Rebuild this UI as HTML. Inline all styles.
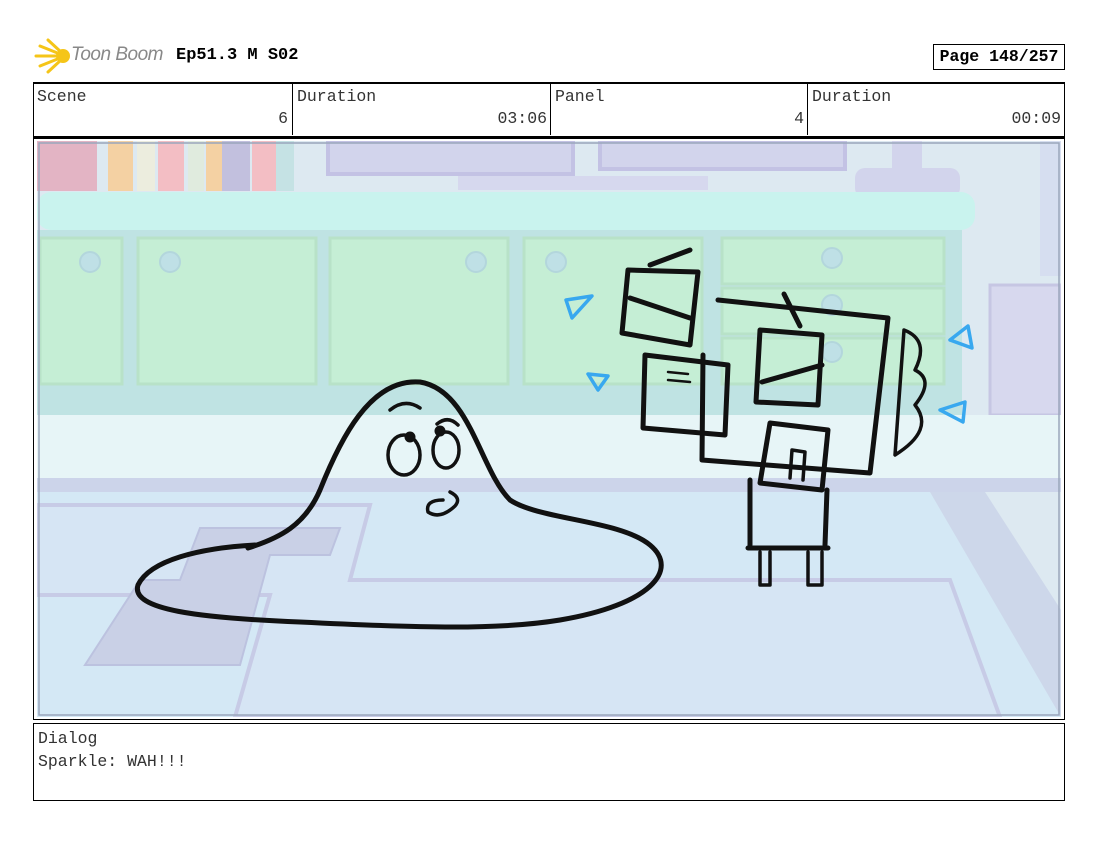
<!DOCTYPE html>
<html><head><style>
body{margin:0;width:1100px;height:850px;background:#fff;position:relative;font-family:"Liberation Mono",monospace;}
.a{position:absolute}
.cell{position:absolute;top:83px;height:52px;border-left:1px solid #000;font-size:16.5px;color:#333}
.cell .l{position:absolute;left:4px;top:4px}
.cell .v{position:absolute;right:4px;top:26px}
</style></head><body>
<svg class="a" style="left:34px;top:38px" width="40" height="36" viewBox="0 0 40 36">
<g stroke="#f5c518" stroke-width="3" stroke-linecap="round"><line x1="2" y1="18" x2="26" y2="18"/><line x1="6" y1="8" x2="26" y2="16"/><line x1="6" y1="28" x2="26" y2="20"/><line x1="14" y1="2" x2="27" y2="14"/><line x1="14" y1="34" x2="27" y2="22"/></g><circle cx="29" cy="18" r="7" fill="#f5c518"/></svg>
<div class="a" style="left:71px;top:44px;font:italic 19px 'Liberation Sans',sans-serif;color:#888;letter-spacing:-0.5px">Toon Boom</div>
<div class="a" style="left:176px;top:46px;font-weight:bold;font-size:17px">Ep51.3 M S02</div>
<div class="a" style="left:933px;top:44px;width:130px;height:24px;border:1px solid #000;font-weight:bold;font-size:16.5px;line-height:24px;text-align:center">Page 148/257</div>
<div class="a" style="left:33px;top:82px;width:1030px;height:52px;border:1px solid #000;border-top-width:2px;border-bottom-width:2px"></div>
<div class="cell" style="left:33px;width:259px;border-left:none"><span class="l">Scene</span><span class="v">6</span></div>
<div class="cell" style="left:292px;width:258px"><span class="l">Duration</span><span class="v">03:06</span></div>
<div class="cell" style="left:550px;width:257px"><span class="l">Panel</span><span class="v">4</span></div>
<div class="cell" style="left:807px;width:257px"><span class="l">Duration</span><span class="v">00:09</span></div>
<div class="a" style="left:33px;top:138px;width:1030px;height:580px;border:1px solid #000"></div>
<svg class="a" style="left:37px;top:141px" width="1024" height="576" viewBox="37 141 1024 576">
<rect x="37" y="141" width="1024" height="576" fill="#dde9f1"/>
<g opacity="0.75"><rect x="37" y="141" width="60" height="50" fill="#e6a3b5"/><rect x="108" y="141" width="25" height="50" fill="#fcc98a"/><rect x="137" y="141" width="18" height="50" fill="#f1efd8"/><rect x="158" y="141" width="26" height="50" fill="#fbb0b5"/><rect x="188" y="141" width="16" height="50" fill="#e2ecd8"/><rect x="206" y="141" width="16" height="50" fill="#fcc98a"/><rect x="222" y="141" width="28" height="50" fill="#b9b3d8"/><rect x="252" y="141" width="24" height="50" fill="#fbb0b5"/><rect x="276" y="141" width="18" height="50" fill="#bde0e0"/></g>
<rect x="328" y="141" width="245" height="33" fill="#d2d4ec" stroke="#c3c2e4" stroke-width="4"/><rect x="600" y="141" width="245" height="28" fill="#d2d4ec" stroke="#c3c2e4" stroke-width="4"/>
<rect x="458" y="176" width="250" height="14" fill="#d6d8ee"/><rect x="855" y="168" width="105" height="30" rx="10" fill="#d2d4ec"/><rect x="892" y="141" width="30" height="28" fill="#d2d4ec"/>
<rect x="37" y="192" width="938" height="38" rx="14" fill="#c9f3ee"/>
<rect x="37" y="230" width="925" height="185" fill="#bfe3e3"/>
<g fill="#c5eed5" stroke="#b8e2c8" stroke-width="3"><rect x="40" y="238" width="82" height="146"/><rect x="138" y="238" width="178" height="146"/><rect x="330" y="238" width="178" height="146"/><rect x="524" y="238" width="178" height="146"/><rect x="722" y="238" width="222" height="46"/><rect x="722" y="288" width="222" height="46"/><rect x="722" y="338" width="222" height="46"/></g>
<g fill="#bfe0e6" stroke="#b3d6dc" stroke-width="2"><circle cx="90" cy="262" r="10"/><circle cx="170" cy="262" r="10"/><circle cx="476" cy="262" r="10"/><circle cx="556" cy="262" r="10"/><circle cx="832" cy="258" r="10"/><circle cx="832" cy="305" r="10"/><circle cx="832" cy="352" r="10"/></g>
<rect x="1040" y="141" width="21" height="135" fill="#d6def0"/><rect x="990" y="285" width="71" height="130" fill="#d7d8ee" stroke="#c6c6e3" stroke-width="3"/>
<rect x="37" y="415" width="1024" height="68" fill="#e7f5f7"/>
<rect x="37" y="478" width="1024" height="14" fill="#ccd4ea"/>
<polygon points="37,492 930,492 1061,700 1061,717 37,717" fill="#d4e8f5"/>
<polygon points="930,492 985,492 1061,610 1061,717" fill="#cdd7ea"/>
<polygon points="37,505 370,505 350,580 950,580 1000,717 235,717 270,595 37,595" fill="#d6e5f4" stroke="#c7cbe6" stroke-width="4"/>
<polygon points="200,528 340,528 330,555 270,555 240,665 85,665 140,580 180,580" fill="#c9d0e6" stroke="#bcc2df" stroke-width="2"/>
<rect x="39" y="143" width="1020" height="572" fill="none" stroke="#9aa6bb" stroke-width="1.5"/>
<g fill="none" stroke="#111" stroke-width="5" stroke-linecap="round" stroke-linejoin="round">
<path d="M255 545 C200 548 150 560 138 585 C130 610 200 618 300 622 C420 628 500 630 560 620 C650 605 680 570 650 545 C620 520 540 520 510 500 C480 470 470 390 420 382 C370 378 340 440 320 490 C305 525 280 538 248 548"/>
<ellipse cx="404" cy="455" rx="16" ry="20" stroke-width="3.5"/><ellipse cx="446" cy="450" rx="13" ry="18" stroke-width="3.5"/>
<circle cx="410" cy="437" r="3" fill="#111"/><circle cx="440" cy="431" r="3" fill="#111"/>
<path d="M390 410 Q405 398 420 408" stroke-width="3.5"/><path d="M437 424 Q448 415 458 425" stroke-width="3.5"/>
<path d="M450 492 Q462 498 455 506 Q440 520 428 512 Q425 500 443 500" stroke-width="3.5"/>
<path d="M650 265 L690 250"/><path d="M628 270 L622 333 L690 345 L698 272 Z"/><path d="M630 298 L690 318"/>
<path d="M718 300 L888 318 L870 473 L702 460 L703 355"/>
<path d="M784 294 L800 326"/><path d="M760 330 L822 335 L818 405 L756 402 Z"/><path d="M762 382 L822 365"/>
<path d="M645 355 L728 365 L725 435 L643 428 Z"/><path d="M668 372 L688 374 M668 380 L690 382" stroke-width="2.5"/>
<path d="M770 423 L828 430 L822 490 L760 483 Z"/><path d="M792 450 L805 452 L803 480 M792 450 L790 478" stroke-width="3.5"/>
<path d="M750 480 L750 545 M827 490 L825 545 M748 548 L828 548"/>
<path d="M760 552 L760 585 L770 585 L770 552 M808 552 L808 585 L822 585 L822 552" stroke-width="3.5"/>
<path d="M904 330 Q930 340 915 370 Q935 380 915 405 Q935 430 895 455 Z" stroke-width="3.5"/>
</g>
<g fill="none" stroke="#38a8ef" stroke-width="3.5" stroke-linejoin="round"><path d="M566 300 L592 296 L572 318 Z"/><path d="M588 374 L608 376 L598 390 Z"/><path d="M968 326 L950 340 L972 348 Z"/><path d="M965 402 L940 410 L963 422 Z"/></g>
</svg>
<div class="a" style="left:33px;top:723px;width:1030px;height:76px;border:1px solid #000;font-size:16.5px;color:#333"><div style="position:absolute;left:4px;top:5px">Dialog</div><div style="position:absolute;left:4px;top:28px">Sparkle: WAH!!!</div></div>
</body></html>
